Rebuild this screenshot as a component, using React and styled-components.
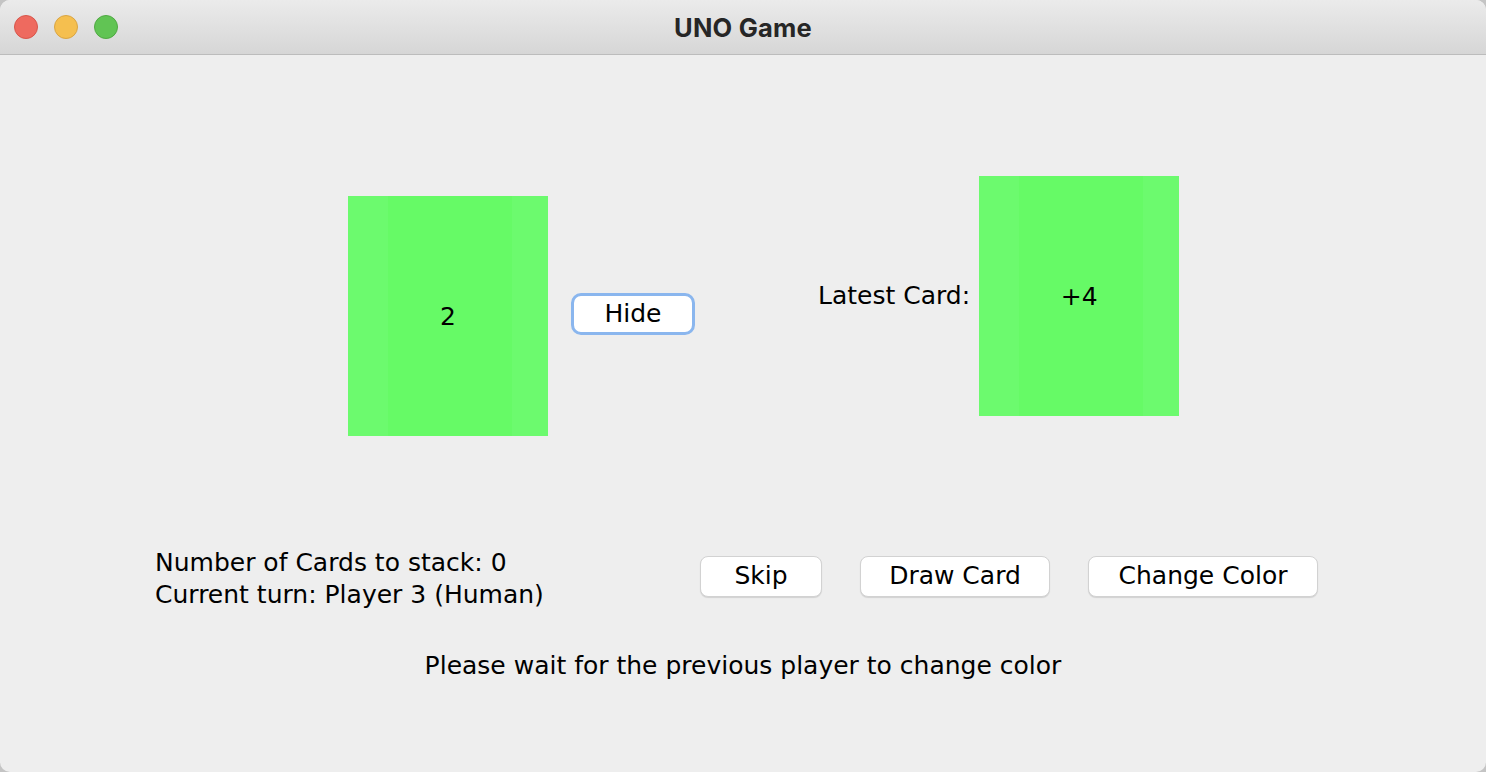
import styled, { createGlobalStyle } from "styled-components";

const GlobalStyle = createGlobalStyle`
  html, body {
    margin: 0;
    padding: 0;
    background-color: #c4c4c4;
  }
  body {
    font-family: "DejaVu Sans", "Liberation Sans", sans-serif;
  }
`;

const StyledWindow = styled.div`
  display: flex;
  flex-direction: column;
  width: 1486px;
  height: 772px;
  border-radius: 10px;
  overflow: hidden;
  background-color: #eeeeee;
`;

const StyledTitleBar = styled.div`
  display: grid;
  grid-template-columns: 1fr auto 1fr;
  align-items: center;
  height: 54px;
  flex-shrink: 0;
  background: linear-gradient(#ebebeb, #d6d6d6);
  border-bottom: 1px solid #bcbcbc;
`;

const StyledLights = styled.div`
  display: flex;
  align-items: center;
  gap: 16px;
  padding-left: 14px;
`;

const StyledLight = styled.span`
  box-sizing: border-box;
  width: 24px;
  height: 24px;
  border-radius: 50%;
  background-color: ${(p) => p.$fill};
  border: 1px solid ${(p) => p.$edge};
`;

const StyledTitle = styled.div`
  font-family: Inter, "Liberation Sans", sans-serif;
  font-weight: 700;
  font-size: 25.5px;
  color: #262626;
  letter-spacing: 0.2px;
`;

const StyledContent = styled.div`
  display: flex;
  flex-direction: column;
  flex: 1;
  font-size: 25px;
  color: #000;
`;

const StyledTopRow = styled.div`
  display: flex;
  align-items: flex-start;
  padding: 121px 0 0 348px;
`;

const StyledGroup = styled.div`
  display: flex;
  align-items: center;
  gap: ${(p) => p.$gap}px;
  margin-top: ${(p) => p.$top || 0}px;
  margin-left: ${(p) => p.$left || 0}px;
`;

const StyledCard = styled.div`
  display: flex;
  align-items: center;
  justify-content: center;
  width: 200px;
  height: 240px;
  background: linear-gradient(
    to right,
    #6cfa6e 0,
    #6cfa6e 40px,
    #66fa66 40px,
    #66fa66 164px,
    #6cfa6e 164px
  );
`;

const StyledHide = styled.button`
  box-sizing: border-box;
  width: 124px;
  height: 42px;
  margin-bottom: 4px;
  padding: 0 0 2px;
  background-color: #ffffff;
  border: 3px solid #8ab6ee;
  border-radius: 10px;
  font-family: inherit;
  font-size: 25px;
  color: #000;
  line-height: 1;
`;

const StyledLabel = styled.span`
  line-height: 28px;
`;

const StyledBottomRow = styled.div`
  display: flex;
  align-items: flex-start;
  margin-top: 111px;
  padding-left: 155px;
`;

const StyledInfo = styled.div`
  display: flex;
  flex-direction: column;
  width: 545px;
  line-height: 32px;
  white-space: nowrap;
`;

const StyledActions = styled.div`
  display: flex;
  gap: 38px;
  margin-top: 9px;
`;

const StyledButton = styled.button`
  box-sizing: border-box;
  width: ${(p) => p.$w}px;
  height: 41px;
  padding: 0 0 2px;
  background-color: #ffffff;
  border: 1px solid #d2d2d2;
  border-radius: 8px;
  box-shadow: 0 1px 1px rgba(0, 0, 0, 0.12);
  font-family: inherit;
  font-size: 25px;
  color: #000;
  line-height: 1;
`;

const StyledMessage = styled.div`
  margin-top: 41px;
  text-align: center;
  line-height: 28px;
`;

function App() {
  return (
    <>
      <GlobalStyle />
      <StyledWindow>
        <StyledTitleBar>
          <StyledLights>
            <StyledLight $fill="#ee6a5f" $edge="#d8564b" />
            <StyledLight $fill="#f5bf4f" $edge="#d9a544" />
            <StyledLight $fill="#61c454" $edge="#50a943" />
          </StyledLights>
          <StyledTitle>UNO Game</StyledTitle>
          <div />
        </StyledTitleBar>
        <StyledContent>
          <StyledTopRow>
            <StyledGroup $gap={23} $top={20}>
              <StyledCard>2</StyledCard>
              <StyledHide>Hide</StyledHide>
            </StyledGroup>
            <StyledGroup $gap={9} $left={123}>
              <StyledLabel>Latest Card:</StyledLabel>
              <StyledCard>+4</StyledCard>
            </StyledGroup>
          </StyledTopRow>
          <StyledBottomRow>
            <StyledInfo>
              <span>Number of Cards to stack: 0</span>
              <span>Current turn: Player 3 (Human)</span>
            </StyledInfo>
            <StyledActions>
              <StyledButton $w={122}>Skip</StyledButton>
              <StyledButton $w={190}>Draw Card</StyledButton>
              <StyledButton $w={230}>Change Color</StyledButton>
            </StyledActions>
          </StyledBottomRow>
          <StyledMessage>Please wait for the previous player to change color</StyledMessage>
        </StyledContent>
      </StyledWindow>
    </>
  );
}

export default App;
